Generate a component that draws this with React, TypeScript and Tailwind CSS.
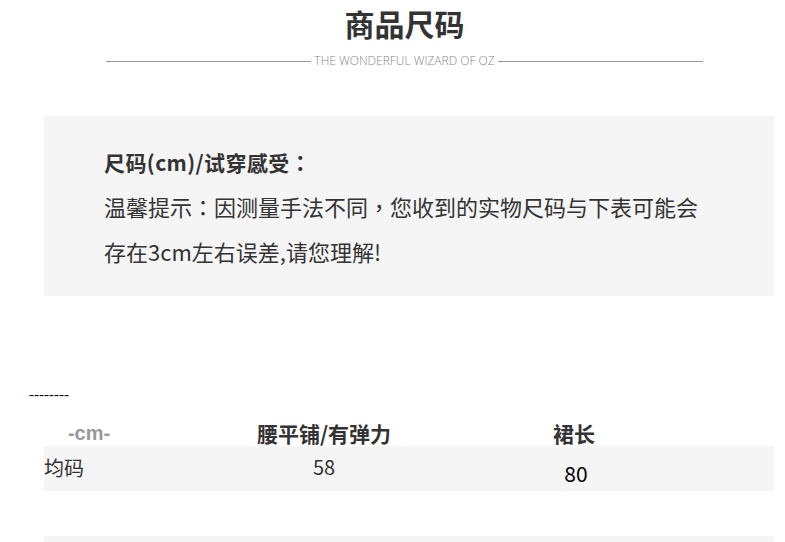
import React from "react";

const cjk = { fontFamily: '"Noto Sans CJK SC", "Noto Sans", sans-serif' };
const cjkTc = { fontFamily: '"Noto Sans CJK TC", "Noto Sans CJK SC", sans-serif' };

export default function App() {
  return (
    <div className="w-[785px] h-[542px] overflow-hidden bg-white text-[#333]" style={cjk}>
      <div className="ml-[106px] w-[597px]">
        <h1 className="h-[46px] text-center text-[30px] font-bold leading-[46px] text-[#333]">商品尺码</h1>
        <div className="mt-[8px] flex h-[14px] items-center">
          <div className="h-px flex-1 bg-[#999]" />
          <span
            className="mx-[3px] text-[12px] font-light leading-[14px] text-[#888]"
            style={{ fontFamily: '"Open Sans", sans-serif' }}
          >
            THE WONDERFUL WIZARD OF OZ
          </span>
          <div className="h-px flex-1 bg-[#999]" />
        </div>
      </div>

      <div className="ml-[44px] mt-[48px] h-[180px] w-[730px] bg-[#f5f5f5] pl-[60px] pt-[24px]" style={cjkTc}>
        <p className="h-[44px] text-[21px] font-bold leading-[45px] tracking-[0.4px] text-[#333]">尺码(cm)/试穿感受：</p>
        <p className="text-[22px] leading-[45px] text-[#333]">温馨提示：因测量手法不同，您收到的实物尺码与下表可能会</p>
        <p className="text-[22px] leading-[45px] text-[#333]">存在3cm左右误差,请您理解!</p>
      </div>

      <div
        className="ml-[29px] mt-[90px] h-[16px] text-[15px] leading-[16px] text-black"
        style={{ fontFamily: '"Liberation Serif", serif' }}
      >
        --------
      </div>

      <div className="ml-[44px] mt-[18px] w-[730px]">
        <div className="grid h-[26px] grid-cols-[90px_380px_120px_1fr] items-center leading-[26px]">
          <div
            className="text-center text-[20px] font-bold text-[#999]"
            style={{ fontFamily: '"Liberation Sans", Arial, sans-serif' }}
          >
            -cm-
          </div>
          <div className="text-center text-[21px] font-bold text-[#333]">腰平铺/有弹力</div>
          <div className="text-center text-[21px] font-bold text-[#333]">裙长</div>
          <div />
        </div>
        <div className="grid h-[45px] grid-cols-[90px_380px_124px_1fr] bg-[#f5f5f5]">
          <div className="pt-[9px] text-left text-[20px] leading-[26px] text-[#333]">均码</div>
          <div className="pt-[8px] text-center text-[20px] leading-[26px] text-[#333]">58</div>
          <div className="pt-[14px] text-center text-[21px] leading-[26px] text-black">80</div>
          <div />
        </div>
        <div className="mt-[45px] h-[10px] bg-[#f5f5f5]" />
      </div>
    </div>
  );
}
